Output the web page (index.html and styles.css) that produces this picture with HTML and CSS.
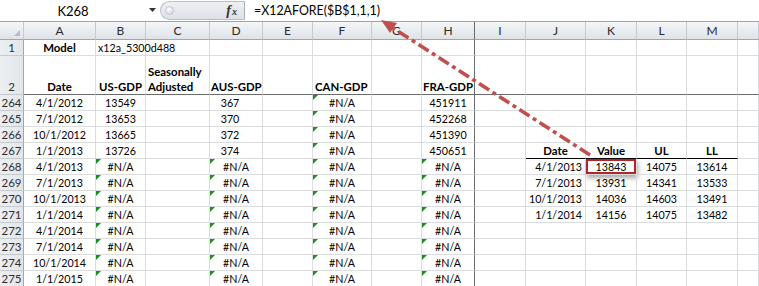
FILE: index.html
```html
<!DOCTYPE html>
<html>
<head>
<meta charset="utf-8">
<link rel="stylesheet" href="styles.css">
</head>
<body>
<div class="fbar">
  <div class="namebox">K268</div>
  <div class="nbdrop"><svg width="8" height="5" viewBox="0 0 8 5"><path d="M0 0H7L3.5 4Z" fill="#333"/></svg></div>
  <div class="fxzone">
    <span class="knob"></span>
    <span class="fx"><span class="fx-f">f</span><span class="fx-x">x</span></span>
  </div>
  <div class="formula">=X12AFORE($B$1,1,1)</div>
</div>
<table class="sheet">
  <colgroup>
    <col class="w-rh"><col class="w-a"><col class="w-b"><col class="w-c"><col class="w-d"><col class="w-e"><col class="w-f"><col class="w-g"><col class="w-h"><col class="w-i"><col class="w-j"><col class="w-k"><col class="w-l"><col class="w-m"><col class="w-n">
  </colgroup>
  <tr class="hdr"><th class="corner"></th><th>A</th><th>B</th><th>C</th><th>D</th><th>E</th><th>F</th><th>G</th><th>H</th><th>I</th><th>J</th><th>K</th><th>L</th><th>M</th><th></th></tr>
  <tr><th class="rh">1</th><td class="c b">Model</td><td class="l">x12a_5300d488</td><td></td><td></td><td></td><td></td><td></td><td></td><td></td><td></td><td></td><td></td><td></td><td></td></tr>
  <tr class="r2"><th class="rh">2</th><td class="c b">Date</td><td class="c b">US-GDP</td><td class="l b wrap">Seasonally Adjusted</td><td class="c b">AUS-GDP</td><td></td><td class="l b">CAN-GDP</td><td></td><td class="c b">FRA-GDP</td><td></td><td></td><td></td><td></td><td></td><td></td></tr>
  <tr><th class="rh">264</th><td class="c">4/1/2012</td><td class="c">13549</td><td></td><td class="c aus">367</td><td></td><td class="c err">#N/A</td><td></td><td class="c">451911</td><td></td><td></td><td></td><td></td><td></td><td></td></tr>
  <tr><th class="rh">265</th><td class="c">7/1/2012</td><td class="c">13653</td><td></td><td class="c aus">370</td><td></td><td class="c err">#N/A</td><td></td><td class="c">452268</td><td></td><td></td><td></td><td></td><td></td><td></td></tr>
  <tr><th class="rh">266</th><td class="c">10/1/2012</td><td class="c">13665</td><td></td><td class="c aus">372</td><td></td><td class="c err">#N/A</td><td></td><td class="c">451390</td><td></td><td></td><td></td><td></td><td></td><td></td></tr>
  <tr><th class="rh">267</th><td class="c">1/1/2013</td><td class="c">13726</td><td></td><td class="c aus">374</td><td></td><td class="c err">#N/A</td><td></td><td class="c">450651</td><td></td><td class="c b th">Date</td><td class="c b th">Value</td><td class="c b th">UL</td><td class="c b th">LL</td><td></td></tr>
  <tr><th class="rh">268</th><td class="c">4/1/2013</td><td class="c err">#N/A</td><td></td><td class="c err">#N/A</td><td></td><td class="c err">#N/A</td><td></td><td class="c err">#N/A</td><td></td><td class="r">4/1/2013</td><td class="c sel">13843</td><td class="c">14075</td><td class="c">13614</td><td></td></tr>
  <tr><th class="rh">269</th><td class="c">7/1/2013</td><td class="c err">#N/A</td><td></td><td class="c err">#N/A</td><td></td><td class="c err">#N/A</td><td></td><td class="c err">#N/A</td><td></td><td class="r">7/1/2013</td><td class="c">13931</td><td class="c">14341</td><td class="c">13533</td><td></td></tr>
  <tr><th class="rh">270</th><td class="c">10/1/2013</td><td class="c err">#N/A</td><td></td><td class="c err">#N/A</td><td></td><td class="c err">#N/A</td><td></td><td class="c err">#N/A</td><td></td><td class="r">10/1/2013</td><td class="c">14036</td><td class="c">14603</td><td class="c">13491</td><td></td></tr>
  <tr><th class="rh">271</th><td class="c">1/1/2014</td><td class="c err">#N/A</td><td></td><td class="c err">#N/A</td><td></td><td class="c err">#N/A</td><td></td><td class="c err">#N/A</td><td></td><td class="r">1/1/2014</td><td class="c">14156</td><td class="c">14075</td><td class="c">13482</td><td></td></tr>
  <tr><th class="rh">272</th><td class="c">4/1/2014</td><td class="c err">#N/A</td><td></td><td class="c err">#N/A</td><td></td><td class="c err">#N/A</td><td></td><td class="c err">#N/A</td><td></td><td></td><td></td><td></td><td></td><td></td></tr>
  <tr><th class="rh">273</th><td class="c">7/1/2014</td><td class="c err">#N/A</td><td></td><td class="c err">#N/A</td><td></td><td class="c err">#N/A</td><td></td><td class="c err">#N/A</td><td></td><td></td><td></td><td></td><td></td><td></td></tr>
  <tr><th class="rh">274</th><td class="c">10/1/2014</td><td class="c err">#N/A</td><td></td><td class="c err">#N/A</td><td></td><td class="c err">#N/A</td><td></td><td class="c err">#N/A</td><td></td><td></td><td></td><td></td><td></td><td></td></tr>
  <tr><th class="rh">275</th><td class="c">1/1/2015</td><td class="c err">#N/A</td><td></td><td class="c err">#N/A</td><td></td><td class="c err">#N/A</td><td></td><td class="c err">#N/A</td><td></td><td></td><td></td><td></td><td></td><td></td></tr>
</table>
<svg class="arrow" width="759" height="286" viewBox="0 0 759 286">
  <line x1="590" y1="155" x2="393" y2="28" stroke="#c0504d" stroke-width="3.6" stroke-dasharray="12 4 4 4"/>
  <polygon points="381,20 397,23 390,33" fill="#c0504d"/>
</svg>
</body>
</html>
```
FILE: styles.css
```css
html, body {
  margin: 0;
  padding: 0;
}
body {
  width: 759px;
  height: 286px;
  overflow: hidden;
  position: relative;
  background: #fff;
  font-family: Lato, "Liberation Sans", sans-serif;
  color: #000;
}

/* formula bar */
.fbar {
  display: flex;
  height: 21px;
  border-bottom: 1px solid #9ea4ab;
  background: #fff;
}
.namebox {
  width: 146px;
  display: flex;
  align-items: center;
  justify-content: center;
  font-size: 13px;
}
.nbdrop {
  width: 14px;
  display: flex;
  align-items: center;
  justify-content: center;
}
.fxzone {
  width: 85px;
  box-sizing: border-box;
  margin: 1px 0;
  background: linear-gradient(#eef0f3, #dde1e6);
  border: 1px solid #b9bfc6;
  border-right-color: #a7adb5;
  border-radius: 10px 0 0 10px;
  display: flex;
  align-items: center;
  justify-content: space-between;
  padding: 0 7px 0 4px;
}
.knob {
  width: 7px;
  height: 7px;
  border-radius: 50%;
  background: radial-gradient(circle at 40% 35%, #ffffff, #c9ced4);
  border: 1px solid #c4c9cf;
}
.fx {
  font-family: "Liberation Serif", serif;
  font-style: italic;
  font-weight: bold;
  color: #333;
  display: flex;
  align-items: baseline;
}
.fx-f {
  font-size: 14px;
}
.fx-x {
  font-size: 10px;
  margin-left: 1px;
}
.formula {
  flex: 1;
  display: flex;
  align-items: center;
  padding-left: 9px;
  font-size: 12.4px;
}

/* sheet */
.sheet {
  border-collapse: separate;
  border-spacing: 0;
  table-layout: fixed;
  width: 759px;
  font-size: 10.7px;
}
.w-rh { width: 24px; }
.w-a { width: 72px; }
.w-b { width: 50px; }
.w-c { width: 64px; }
.w-d { width: 53px; }
.w-e { width: 50px; }
.w-f { width: 59px; }
.w-g { width: 50px; }
.w-h { width: 53px; }
.w-i { width: 51px; }
.w-j { width: 60px; }
.w-k { width: 51px; }
.w-l { width: 50px; }
.w-m { width: 51px; }
.w-n { width: 21px; }

.sheet td, .sheet th {
  box-sizing: border-box;
  height: 16px;
  padding: 0 1px;
  border-right: 1px solid #dadcdd;
  border-bottom: 1px solid #dadcdd;
  white-space: nowrap;
  overflow: visible;
  vertical-align: bottom;
  line-height: 15px;
  font-weight: normal;
  text-align: left;
}
.sheet td.b {
  font-weight: bold;
  font-size: 11.4px;
}
.sheet tr.hdr th {
  height: 18px;
  background: linear-gradient(#f4f6f8, #dfe3e8);
  border-right: 1px solid #c5cad1;
  border-bottom: 1px solid #9fa7b1;
  text-align: center;
  font-size: 12px;
  color: #2a2a2a;
  line-height: 16px;
}
.sheet tr.hdr th.corner {
  position: relative;
}
.sheet tr.hdr th.corner::after {
  content: "";
  position: absolute;
  right: 3px;
  bottom: 3px;
  border-bottom: 6px solid #b7bcc3;
  border-left: 6px solid transparent;
}
.sheet th.rh {
  background: linear-gradient(90deg, #eceff2, #e2e6ea);
  border-right: 1px solid #9fa7b1;
  border-bottom: 1px solid #c5cad1;
  text-align: center;
  font-size: 11.5px;
  color: #2e2e2e;
  padding: 0;
}
.sheet tr.r2 td,
.sheet tr.r2 th {
  height: 39px;
}
.sheet tr.r2 td {
  border-bottom-color: #6b6b6b;
}
.sheet td:nth-child(9),
.sheet tr.hdr th:nth-child(9) {
  border-right-color: #6b6b6b;
}

.sheet td.c { text-align: center; }
.sheet td.l { text-align: left; padding-left: 2px; }
.sheet td.r { text-align: right; padding-right: 3px; }
.sheet td.wrap {
  white-space: normal;
  line-height: 15px;
}
.sheet td.aus {
  padding-right: 13px;
}
.sheet td.th {
  border-bottom: 1px solid #000;
}
.sheet td.err {
  position: relative;
}
.sheet td.err::before {
  content: "";
  position: absolute;
  left: 0;
  top: 0;
  border-top: 5px solid #1e8c1e;
  border-right: 5px solid transparent;
}
.sheet td.sel {
  box-shadow: inset 0 0 0 2px #b0262b, 1px 3px 5px rgba(0, 0, 0, 0.35);
}

/* overlay arrow */
.arrow {
  position: absolute;
  left: 0;
  top: 0;
  pointer-events: none;
}
```
